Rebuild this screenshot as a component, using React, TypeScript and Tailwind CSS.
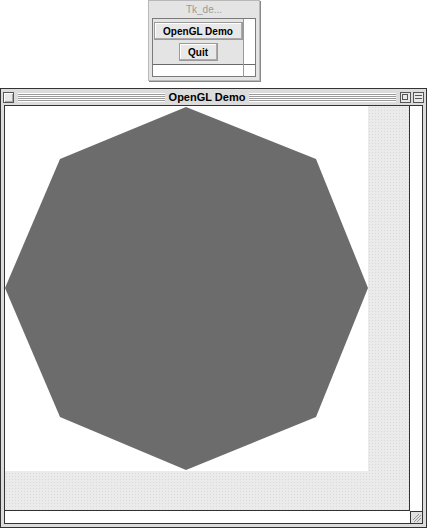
import React from "react";

const font = { fontFamily: '"Liberation Sans", Arial, sans-serif' };

function Stripes() {
  return (
    <div className="flex-1 h-[9px] mx-[4px] bg-[repeating-linear-gradient(to_bottom,#ffffff_0px,#ffffff_1px,#9a9a9a_1px,#9a9a9a_2px)]" />
  );
}

function SmallWindow() {
  return (
    <div className="ml-[148px] w-[112px] h-[81px] border border-[#b8b8b8] bg-[#e4e4e4] shadow-[1px_1px_0_#888] flex flex-col">
      <div className="h-[16px] flex items-center justify-center text-[10px] text-[#9a9a9a]">Tk_de...</div>
      <div className="relative mx-[3px] mt-[1px] h-[59px] bg-white border border-[#7a7a7a]">
        <div className="absolute left-0 top-[45px] w-[102px] border-t border-[#6a6a6a]" />
        <div className="absolute left-[90px] top-[0px] h-[58px] border-l border-[#9a9a9a]" />
        <div className="absolute left-0 top-0 w-[90px] h-[45px] bg-[#e4e4e4] flex flex-col items-center pt-[3px] gap-[3px]">
          <div className="w-[89px] h-[18px] border border-[#9a9a9a] bg-[#e8e8e8] shadow-[inset_-1px_-1px_0_#aaa,inset_1px_1px_0_#fff] flex items-center justify-center text-[10px] font-bold text-black">
            OpenGL Demo
          </div>
          <div className="w-[39px] h-[18px] border border-[#9a9a9a] bg-[#e8e8e8] shadow-[inset_-1px_-1px_0_#aaa,inset_1px_1px_0_#fff] flex items-center justify-center text-[10px] font-bold text-black">
            Quit
          </div>
        </div>
      </div>
    </div>
  );
}

function BigWindow() {
  return (
    <div className="mt-[7px] w-[427px] h-[440px] border border-[#333] bg-[#dcdcdc] flex flex-col">
      <div className="h-[16px] flex items-center px-[2px]">
        <div className="w-[11px] h-[11px] border border-[#555] bg-[#e8e8e8] shadow-[inset_1px_1px_0_#fff,inset_-1px_-1px_0_#aaa]" />
        <Stripes />
        <div className="text-[11px] font-bold text-black leading-none">OpenGL Demo</div>
        <Stripes />
        <div className="w-[11px] h-[11px] border border-[#555] bg-[#e8e8e8] relative">
          <div className="absolute left-[1px] top-[1px] w-[6px] h-[6px] border border-[#555]" />
        </div>
        <div className="w-[11px] h-[11px] ml-[2px] border border-[#555] bg-[#e8e8e8] flex flex-col justify-center gap-[2px] px-[1px]">
          <div className="h-px bg-[#555]" />
          <div className="h-px bg-[#555]" />
        </div>
      </div>
      <div className="flex-1 mx-[3px] mb-[3px] border border-[#333] bg-white flex flex-col">
        <div className="flex flex-1">
          <div className="flex-1 flex flex-col border-r border-b border-[#333]">
            <div className="flex-1 flex bg-[#ebebeb] bg-[radial-gradient(#d9d9d9_0.6px,transparent_0.8px)] bg-[length:3px_3px]">
              <div className="flex flex-col">
                <div className="w-[363px] h-[365px] bg-white">
                  <svg width="363" height="365" viewBox="0 0 363 365">
                    <polygon points="181,1 311,53 363,182 311,311 181,364 55,311 0,182 55,53" fill="#6c6c6c" />
                  </svg>
                </div>
              </div>
            </div>
          </div>
          <div className="w-[12px]" />
        </div>
        <div className="h-[12px] flex justify-end">
          <div className="w-[12px] h-[12px] border-l border-t border-[#333] bg-[#e0e0e0] relative">
            <svg width="11" height="11" viewBox="0 0 11 11" className="absolute left-0 top-0">
              <path d="M3 10 L10 3 M6 10 L10 6 M2 8 L8 2" stroke="#999" strokeWidth="1" />
            </svg>
          </div>
        </div>
      </div>
    </div>
  );
}

export default function App() {
  return (
    <div className="w-[427px] h-[528px] bg-white overflow-hidden flex flex-col" style={font}>
      <SmallWindow />
      <BigWindow />
    </div>
  );
}
